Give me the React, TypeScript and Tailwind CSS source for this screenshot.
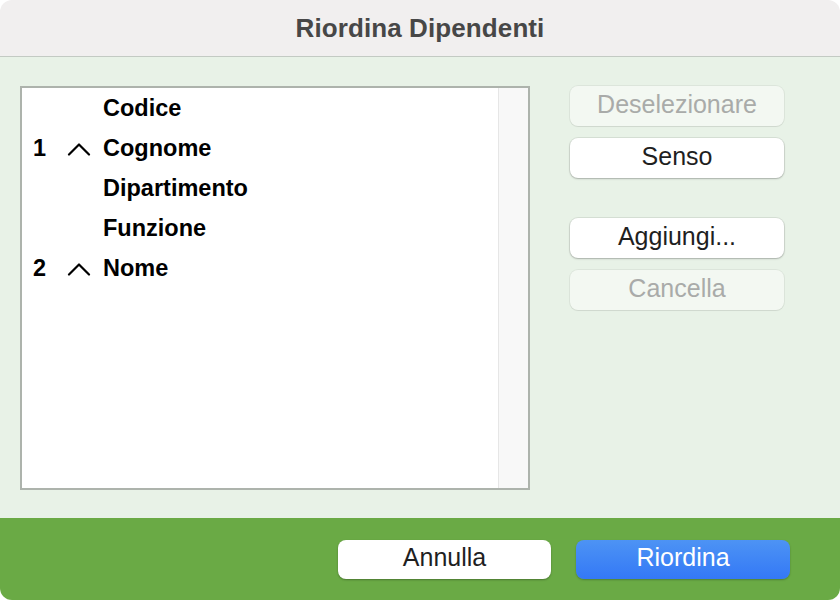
import React from 'react'

// "Riordina Dipendenti" sort dialog — list of fields on the left,
// command buttons on the right, cancel/confirm in the green footer.

interface Field {
  order?: number
  name: string
}

const fields: Field[] = [
  { name: 'Codice' },
  { order: 1, name: 'Cognome' },
  { name: 'Dipartimento' },
  { name: 'Funzione' },
  { order: 2, name: 'Nome' },
]

function Caret() {
  return (
    <svg width="24" height="14" viewBox="0 0 24 14" fill="none">
      <polyline
        points="2,12.5 12,2.5 22,12.5"
        stroke="#000"
        strokeWidth="2.2"
        strokeLinecap="round"
        strokeLinejoin="round"
      />
    </svg>
  )
}

function SideButton({ label, disabled }: { label: string; disabled?: boolean }) {
  return (
    <button
      type="button"
      disabled={disabled}
      className={
        disabled
          ? 'h-[40px] w-full rounded-[8px] bg-[#f3f8f2] pb-[4px] text-[25px] leading-none text-[#a9aba9] shadow-[0_0_0_1px_rgba(0,0,0,0.05),0_1px_1px_rgba(0,0,0,0.06)]'
          : 'h-[40px] w-full rounded-[8px] bg-white pb-[4px] text-[25px] leading-none text-[#1f1f1f] shadow-[0_0_0_1px_rgba(0,0,0,0.07),0_1px_2px_rgba(0,0,0,0.22)]'
      }
    >
      {label}
    </button>
  )
}

export default function App() {
  return (
    <div
      className="w-[840px] h-[600px] bg-white"
      style={{ fontFamily: '"Liberation Sans", Arial, sans-serif' }}
    >
      <div className="flex h-full flex-col overflow-hidden rounded-[12px]">
        <div className="flex h-[57px] shrink-0 items-center justify-center border-b border-[#c3cac3] bg-[#f1efef]">
          <span className="text-[26px] font-bold tracking-[0.1px] text-[#474747]">
            Riordina Dipendenti
          </span>
        </div>

        <div className="flex flex-1 bg-[#e8f2e7] pl-[20px] pt-[29px]">
          <div className="flex h-[404px] w-[510px] border-2 border-[#adb3ac] bg-white">
            <div className="flex-1">
              {fields.map((f) => (
                <div key={f.name} className="flex h-[40px] items-center pt-[1px] text-[23.5px] font-bold text-black">
                  <span className="w-[45px] pl-[11px]">{f.order ?? ''}</span>
                  <span className="flex w-[36px] items-center">{f.order ? <Caret /> : null}</span>
                  <span>{f.name}</span>
                </div>
              ))}
            </div>
            <div className="w-[30px] border-l border-[#e6e6e6] bg-[#f8f8f8]" />
          </div>

          <div className="ml-[40px] flex w-[214px] flex-col">
            <SideButton label="Deselezionare" disabled />
            <div className="mt-[12px]">
              <SideButton label="Senso" />
            </div>
            <div className="mt-[40px]">
              <SideButton label="Aggiungi..." />
            </div>
            <div className="mt-[12px]">
              <SideButton label="Cancella" disabled />
            </div>
          </div>
        </div>

        <div className="flex h-[82px] shrink-0 justify-end gap-[25px] bg-[#6aaa45] pr-[50px] pt-[22px]">
          <button
            type="button"
            className="h-[39px] w-[213px] rounded-[8px] bg-white pb-[4px] text-[25px] leading-none text-[#1f1f1f] shadow-[0_1px_2px_rgba(0,0,0,0.3)]"
          >
            Annulla
          </button>
          <button
            type="button"
            className="h-[39px] w-[214px] rounded-[8px] bg-gradient-to-b from-[#4d93f4] to-[#3478f6] pb-[4px] text-[25px] leading-none text-white shadow-[0_1px_2px_rgba(0,0,0,0.25)]"
          >
            Riordina
          </button>
        </div>
      </div>
    </div>
  )
}
